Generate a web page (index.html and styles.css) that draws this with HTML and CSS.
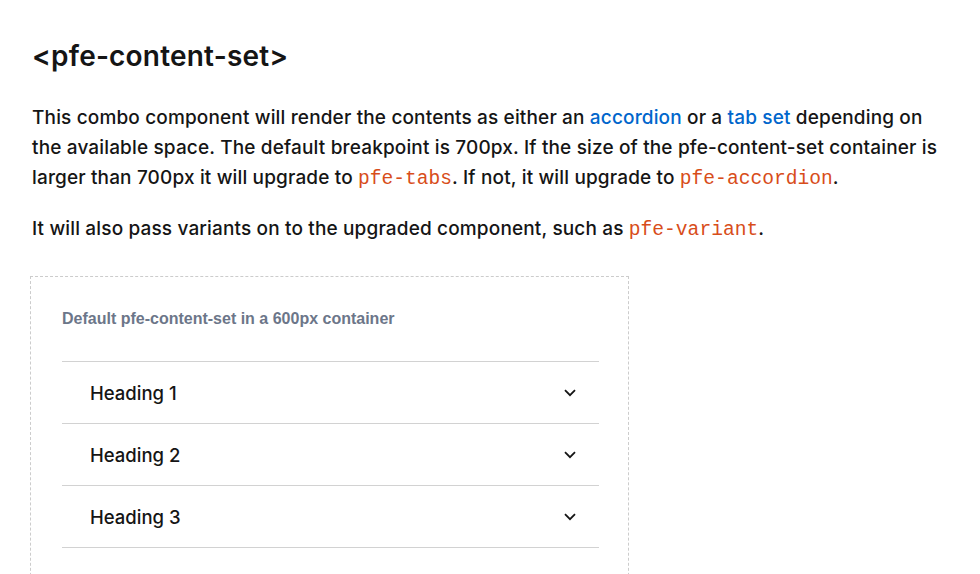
FILE: index.html
```html
<!DOCTYPE html>
<html>
<head>
<meta charset="utf-8">
<link rel="stylesheet" href="styles.css">
</head>
<body>
<main class="page">
  <h1 class="title">&lt;pfe-content-set&gt;</h1>
  <p class="lead">This combo component will render the contents as either an <a href="#">accordion</a> or a <a href="#">tab set</a> depending on the available space. The default breakpoint is 700px. If the size of the pfe-content-set container is larger than 700px it will upgrade to <code>pfe-tabs</code>. If not, it will upgrade to <code>pfe-accordion</code>.</p>
  <p class="lead narrow">It will also pass variants on to the upgraded component, such as <code>pfe-variant</code>.</p>
  <section class="demo">
    <h2 class="caption">Default pfe-content-set in a 600px container</h2>
    <div class="accordion">
      <div class="acc-row"><span>Heading 1</span><svg class="chev" viewBox="0 0 12 8" width="12" height="8"><path d="M1 1.2 L6 6.2 L11 1.2" fill="none" stroke="#151515" stroke-width="1.8"/></svg></div>
      <div class="acc-row"><span>Heading 2</span><svg class="chev" viewBox="0 0 12 8" width="12" height="8"><path d="M1 1.2 L6 6.2 L11 1.2" fill="none" stroke="#151515" stroke-width="1.8"/></svg></div>
      <div class="acc-row"><span>Heading 3</span><svg class="chev" viewBox="0 0 12 8" width="12" height="8"><path d="M1 1.2 L6 6.2 L11 1.2" fill="none" stroke="#151515" stroke-width="1.8"/></svg></div>
    </div>
  </section>
</main>
</body>
</html>
```
FILE: styles.css
```css
html, body { margin: 0; padding: 0; background: #fff; }
body { font-family: "Inter", "Noto Sans", sans-serif; color: #151515; }
.page { padding: 36px 32px 0 32px; }
.title {
  margin: 0;
  font-size: 28px;
  font-weight: 600;
  line-height: 40px;
  letter-spacing: 0.2px;
}
.lead {
  margin: 27px 0 0 0;
  font-size: 19px;
  line-height: 30px;
  font-weight: 500;
  letter-spacing: 0.15px;
  max-width: 916px;
}
.lead.narrow { margin-top: 21px; }
.lead a { color: #0066cc; text-decoration: none; }
.lead code {
  font-family: "Liberation Mono", monospace;
  font-size: 19.6px;
  line-height: 1;
  letter-spacing: 0;
  color: #d84d1a;
  font-weight: 400;
}
.demo {
  margin-top: 32px;
  width: 599px;
  box-sizing: border-box;
  margin-left: -2px;
  border: 1px dashed #cccccc;
  border-bottom: none;
  padding: 32px 29px 40px 31px;
  height: 320px;
}
.caption {
  margin: 0 0 33px 0;
  font-family: "Liberation Sans", Arial, sans-serif;
  font-size: 16px;
  font-weight: 700;
  color: #6c7689;
  line-height: 19px;
}
.accordion { border-top: 1px solid #d2d2d2; }
.acc-row {
  display: flex;
  align-items: center;
  justify-content: space-between;
  height: 61px;
  border-bottom: 1px solid #d2d2d2;
  padding: 0 23px 0 28px;
  font-size: 18.5px;
  font-weight: 500;
}
.chev { display: block; }
```
